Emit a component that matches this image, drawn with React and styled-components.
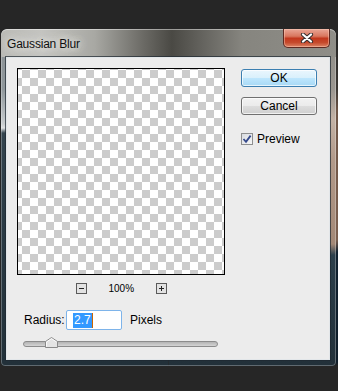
import { createGlobalStyle, styled } from "styled-components";

const GlobalStyle = createGlobalStyle`
  html, body {
    margin: 0;
    padding: 0;
    background: #262626;
  }
  body {
    width: 338px;
    height: 391px;
    overflow: hidden;
    font-family: "Liberation Sans", Arial, sans-serif;
    font-size: 12px;
    color: #000;
    background:
      linear-gradient(#262626 0, #262626 40px, #3c3834 90px, #6e5546 110px, #7a5e4e 240px, #10202e 252px, #0e1c28 362px, #262626 366px) right top / 3px 100% no-repeat,
      #262626;
  }
`;

const App = () => {
  return (
    <>
      <GlobalStyle />
      <Window>
        <TitleBar>
          <Title>Gaussian Blur</Title>
          <CloseButton>
            <svg width="14" height="10" viewBox="0 0 14 10">
              <path d="M3 1.5 L11 8.5 M11 1.5 L3 8.5" stroke="#3a3030" strokeWidth="4.2" strokeLinecap="round" />
              <path d="M3 1.5 L11 8.5 M11 1.5 L3 8.5" stroke="#ffffff" strokeWidth="2.2" strokeLinecap="round" />
            </svg>
          </CloseButton>
        </TitleBar>
        <Client>
          <TopRow>
            <PreviewCol>
              <Canvas />
              <ZoomRow>
                <ZoomButton>
                  <svg width="9" height="9" viewBox="0 0 9 9">
                    <path d="M2 4.5 H7" stroke="#222" strokeWidth="1" />
                  </svg>
                </ZoomButton>
                <ZoomLabel>100%</ZoomLabel>
                <ZoomButton>
                  <svg width="9" height="9" viewBox="0 0 9 9">
                    <path d="M2 4.5 H7 M4.5 2 V7" stroke="#222" strokeWidth="1" />
                  </svg>
                </ZoomButton>
              </ZoomRow>
            </PreviewCol>
            <ButtonCol>
              <DialogButton $primary>OK</DialogButton>
              <DialogButton>Cancel</DialogButton>
              <CheckRow>
                <CheckBox>
                  <svg width="10" height="10" viewBox="0 0 10 10">
                    <path d="M1.5 5 L4 7.8 L8.6 1.6" stroke="#354a8c" strokeWidth="1.8" fill="none" />
                  </svg>
                </CheckBox>
                <span>Preview</span>
              </CheckRow>
            </ButtonCol>
          </TopRow>
          <RadiusRow>
            <Label>Radius:</Label>
            <ValueInput>
              <Selected>2.7</Selected>
              <Caret />
            </ValueInput>
            <Unit>Pixels</Unit>
          </RadiusRow>
          <Slider>
            <Track />
            <Thumb style={{ left: "22px" }}>
              <svg width="13" height="11" viewBox="0 0 13 11">
                <path d="M0.5 10.5 V4.5 L6.5 0.5 L12.5 4.5 V10.5 Z" fill="#e4e4e4" stroke="#8a8a8a" />
                <path d="M1.5 9.5 V5 L6.5 1.7 L11.5 5" fill="none" stroke="#fafafa" />
              </svg>
            </Thumb>
          </Slider>
        </Client>
      </Window>
    </>
  );
};

export default App;

const Window = styled.div`
  margin: 29px 0 0 1px;
  width: 335px;
  height: 337px;
  box-sizing: border-box;
  display: flex;
  flex-direction: column;
  border-radius: 6px 6px 4px 4px;
  overflow: hidden;
  background:
    linear-gradient(#8c9194 0, #8f979b 60px, #c9cdcf 95px, #dfe1e2 99px, #34444e 104px, #2a3a44 200px, #223039 100%) left top / 50% 100% no-repeat,
    linear-gradient(#8d8c86 0, #9a9690 60px, #c3b2a5 90px, #b29a8a 130px, #a38876 215px, #2c3f4b 226px, #223039 100%) right top / 50% 100% no-repeat;
  box-shadow: inset 0 0 0 1px rgba(255, 255, 255, 0.28);
`;

const TitleBar = styled.div`
  height: 28px;
  display: flex;
  justify-content: space-between;
  align-items: flex-start;
  background: linear-gradient(
    to right,
    #b9b9b5 0%,
    #c4c4c0 12%,
    #a8a8a3 28%,
    #6d6c67 42%,
    #4a4944 51%,
    #64635e 60%,
    #86857f 72%,
    #8f8e88 100%
  );
  border-radius: 6px 6px 0 0;
  box-shadow: inset 0 1px 0 rgba(255, 255, 255, 0.45);
`;

const Title = styled.span`
  padding: 8px 0 0 6px;
  line-height: 14px;
  letter-spacing: -0.2px;
  color: #101010;
  text-shadow: 0 0 6px #e8e8e4, 0 0 10px #e0e0dc, 0 0 14px #d8d8d4;
`;

const CloseButton = styled.div`
  width: 47px;
  height: 19px;
  margin-right: 6px;
  box-sizing: border-box;
  display: flex;
  align-items: center;
  justify-content: center;
  border: 1px solid #5e2a22;
  border-top: none;
  border-radius: 0 0 5px 5px;
  background: linear-gradient(#e9a696 0%, #d9775f 40%, #c2381e 52%, #c64a2c 75%, #dc8466 100%);
  box-shadow: inset 0 0 0 1px rgba(255, 210, 190, 0.45);
`;

const Client = styled.div`
  flex: 1;
  margin: 0 6px 6px 5px;
  padding: 10px 0 0 10px;
  box-sizing: border-box;
  background: #ececec;
  border: 1px solid #e2e6e9;
  box-shadow: 0 0 0 1px rgba(30, 40, 48, 0.7);
  display: flex;
  flex-direction: column;
`;

const TopRow = styled.div`
  display: flex;
`;

const PreviewCol = styled.div`
  display: flex;
  flex-direction: column;
  width: 208px;
`;

const Canvas = styled.div`
  width: 208px;
  height: 207px;
  box-sizing: border-box;
  border: 1px solid #000;
  background: repeating-conic-gradient(#cccccc 0 25%, #ffffff 0 50%) -4px 1px / 16px 16px;
`;

const ZoomRow = styled.div`
  margin-top: 8px;
  height: 11px;
  display: flex;
  align-items: center;
  justify-content: center;
  gap: 22px;
`;

const ZoomButton = styled.div`
  width: 11px;
  height: 11px;
  box-sizing: border-box;
  border: 1px solid #5a5a5a;
  background: #e2e2e2;
  display: flex;
  align-items: center;
  justify-content: center;
`;

const ZoomLabel = styled.span`
  font-size: 10px;
  line-height: 11px;
  width: 25px;
  text-align: center;
`;

const ButtonCol = styled.div`
  margin-left: 16px;
  padding-top: 1px;
  width: 76px;
  display: flex;
  flex-direction: column;
`;

const DialogButton = styled.div`
  height: 18px;
  box-sizing: border-box;
  margin-bottom: 10px;
  display: flex;
  align-items: center;
  justify-content: center;
  border-radius: 3px;
  border: 1px solid ${(p) => (p.$primary ? "#3c7fb1" : "#707070")};
  background: ${(p) =>
    p.$primary
      ? "linear-gradient(#eaf6fd 0%, #d9f0fc 50%, #bee6fd 51%, #a7d9f5 100%)"
      : "linear-gradient(#f2f2f2 0%, #ebebeb 50%, #dddddd 51%, #cfcfcf 100%)"};
  box-shadow: inset 0 0 0 1px rgba(255, 255, 255, 0.7);
`;

const CheckRow = styled.div`
  margin-top: 7px;
  display: flex;
  align-items: center;
  gap: 4px;
  height: 14px;
`;

const CheckBox = styled.div`
  width: 12px;
  height: 12px;
  box-sizing: border-box;
  border: 1px solid #8e8f8f;
  background: linear-gradient(135deg, #d8dbe0, #f7f7f7);
  display: flex;
  align-items: center;
  justify-content: center;
`;

const RadiusRow = styled.div`
  margin-top: 16px;
  padding-left: 7px;
  height: 20px;
  display: flex;
  align-items: center;
`;

const Label = styled.span`
  width: 42px;
`;

const ValueInput = styled.div`
  width: 56px;
  height: 20px;
  box-sizing: border-box;
  border: 1px solid #7eb4ea;
  border-radius: 2px;
  background: #fff;
  padding: 1px 0 0 6px;
  display: flex;
  align-items: center;
`;

const Selected = styled.span`
  background: #3399ff;
  color: #fff;
  line-height: 15px;
  padding: 0 1px;
`;

const Caret = styled.span`
  width: 1px;
  height: 15px;
  background: #cc6600;
`;

const Unit = styled.span`
  margin-left: 8px;
`;

const Slider = styled.div`
  position: relative;
  margin: 11px 0 0 6px;
  width: 195px;
  height: 6px;
`;

const Track = styled.div`
  height: 6px;
  box-sizing: border-box;
  border: 1px solid #8c8c8c;
  border-radius: 3px;
  background: linear-gradient(#b4b4b4, #d4d4d4);
`;

const Thumb = styled.div`
  position: absolute;
  top: -4px;
  width: 13px;
  height: 11px;
  display: flex;
`;
